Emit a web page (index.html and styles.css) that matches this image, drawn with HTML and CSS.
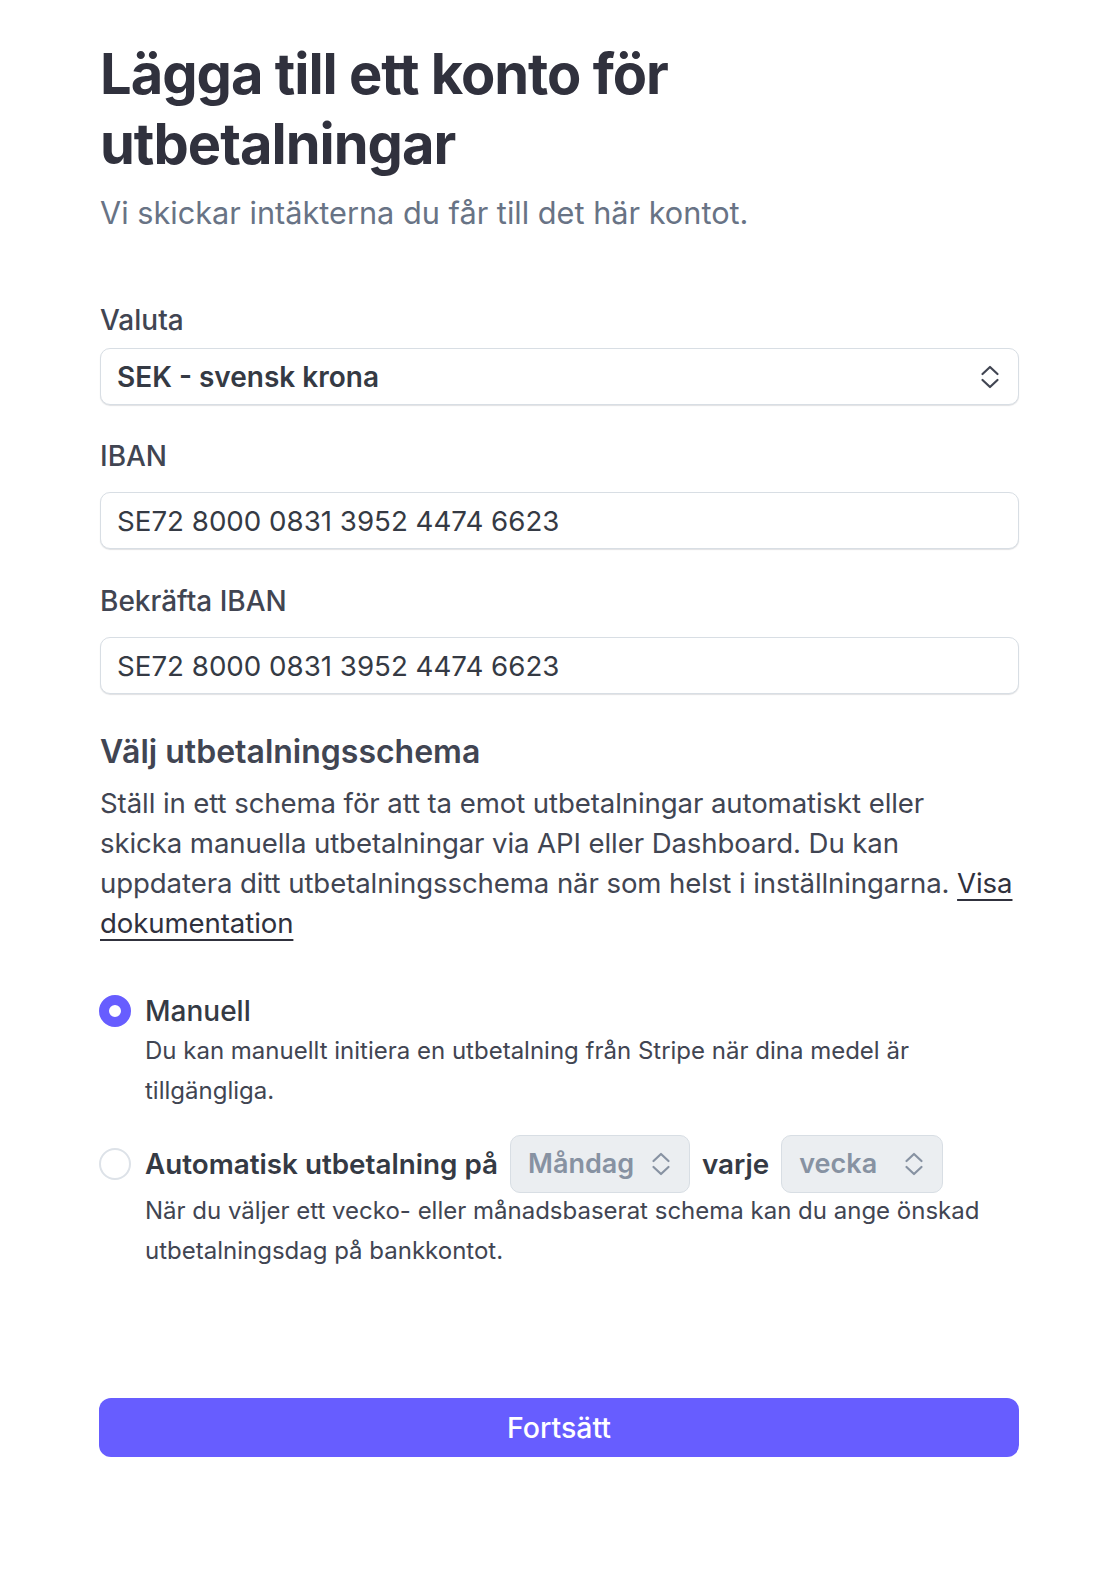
FILE: index.html
```html
<!DOCTYPE html>
<html lang="sv">
<head>
<meta charset="utf-8">
<title>Lägga till ett konto för utbetalningar</title>
<link rel="stylesheet" href="styles.css">
</head>
<body>
<main class="page">
  <h1 class="title">Lägga till ett konto för utbetalningar</h1>
  <p class="subtitle">Vi skickar intäkterna du får till det här kontot.</p>

  <form class="form">
    <div class="field field-currency">
      <label class="field-label">Valuta</label>
      <div class="select">
        <span class="select-value">SEK - svensk krona</span>
        <svg class="chevrons" width="20" height="26" viewBox="0 0 20 26"><path d="M2.5 10 L10 3 L17.5 10 M2.5 16 L10 23 L17.5 16" fill="none" stroke="currentColor" stroke-width="2.2" stroke-linecap="round" stroke-linejoin="round"/></svg>
      </div>
    </div>

    <div class="field">
      <label class="field-label">IBAN</label>
      <div class="input">SE72 8000 0831 3952 4474 6623</div>
    </div>

    <div class="field field-confirm">
      <label class="field-label">Bekräfta IBAN</label>
      <div class="input">SE72 8000 0831 3952 4474 6623</div>
    </div>

    <section class="schedule">
      <h2 class="schedule-title">Välj utbetalningsschema</h2>
      <p class="schedule-text">Ställ in ett schema för att ta emot utbetalningar automatiskt eller<br>skicka manuella utbetalningar via API eller Dashboard. Du kan<br>uppdatera ditt utbetalningsschema när som helst i inställningarna. <a class="link" href="#">Visa<br>dokumentation</a></p>

      <div class="options">
        <div class="option">
          <span class="radio radio-checked"></span>
          <div class="option-head">Manuell</div>
          <p class="option-desc">Du kan manuellt initiera en utbetalning från Stripe när dina medel är tillgängliga.</p>
        </div>

        <div class="option option-auto">
          <span class="radio"></span>
          <div class="option-head option-head-row">
            <span>Automatisk utbetalning på</span>
            <span class="mini-select mini-select-day">
              <span>Måndag</span>
              <svg class="chevrons" width="20" height="26" viewBox="0 0 20 26"><path d="M2.5 10 L10 3 L17.5 10 M2.5 16 L10 23 L17.5 16" fill="none" stroke="currentColor" stroke-width="2.2" stroke-linecap="round" stroke-linejoin="round"/></svg>
            </span>
            <span>varje</span>
            <span class="mini-select mini-select-period">
              <span>vecka</span>
              <svg class="chevrons" width="20" height="26" viewBox="0 0 20 26"><path d="M2.5 10 L10 3 L17.5 10 M2.5 16 L10 23 L17.5 16" fill="none" stroke="currentColor" stroke-width="2.2" stroke-linecap="round" stroke-linejoin="round"/></svg>
            </span>
          </div>
          <p class="option-desc option-desc-auto">När du väljer ett vecko- eller månadsbaserat schema kan du ange önskad utbetalningsdag på bankkontot.</p>
        </div>
      </div>
    </section>

    <button type="button" class="submit">Fortsätt</button>
  </form>
</main>
</body>
</html>
```

FILE: styles.css
```css
* { box-sizing: border-box; }

body {
  margin: 0;
  background: #ffffff;
  color: #30313d;
  font-family: Inter, "Noto Sans", sans-serif;
}

.page {
  width: 919px;
  margin-left: 100px;
  padding-top: 39px;
  padding-bottom: 120px;
}

.title {
  margin: 0;
  max-width: 720px;
  font-size: 56px;
  line-height: 70px;
  font-weight: 700;
  letter-spacing: -1px;
  color: #30313d;
}

.subtitle {
  margin: 14px 0 0;
  font-size: 30.7px;
  line-height: 40px;
  color: #687385;
}

.form {
  margin-top: 71px;
}

.field + .field {
  margin-top: 35px;
}

.field-confirm {
  padding-top: 1px;
}

.field-label {
  display: block;
  margin-bottom: 20px;
  font-size: 28px;
  line-height: 32px;
  font-weight: 500;
  color: #414552;
}

.field-currency .field-label {
  margin-bottom: 12px;
}

.select,
.input {
  display: flex;
  align-items: center;
  height: 57px;
  padding: 0 18px 0 16px;
  border: 1px solid #d8dee4;
  border-radius: 10px;
  box-shadow: 0 1px 1px rgba(64, 68, 82, 0.16);
  background: #ffffff;
  font-size: 28px;
  color: #353a44;
}

.input {
  font-size: 27.7px;
}

.select {
  justify-content: space-between;
}

.select-value {
  font-weight: 600;
}

.chevrons {
  display: block;
  flex: none;
  color: #414552;
}

.schedule {
  margin-top: 38px;
}

.schedule-title {
  margin: 0;
  font-size: 32px;
  line-height: 40px;
  font-weight: 600;
  color: #414552;
}

.schedule-text {
  margin: 11px -14px 0 0;
  font-size: 27.6px;
  line-height: 40px;
  letter-spacing: -0.1px;
  color: #414552;
}

.link {
  color: #30313d;
  text-decoration: underline;
  text-decoration-thickness: 2px;
  text-underline-offset: 6px;
}

.options {
  margin-top: 48px;
}

.option {
  display: grid;
  grid-template-columns: 32px 1fr;
  column-gap: 14px;
  margin-left: -1px;
}

.option + .option {
  margin-top: 24px;
}

.radio {
  grid-column: 1;
  grid-row: 1;
  align-self: center;
  width: 32px;
  height: 32px;
  border-radius: 50%;
  border: 2px solid #dde2e8;
  background: #ffffff;
}

.radio-checked {
  border: 10px solid #675dff;
}

.option-head {
  grid-column: 2;
  grid-row: 1;
  font-size: 28px;
  line-height: 40px;
  font-weight: 500;
  color: #353a44;
}

.option-head-row {
  display: flex;
  align-items: center;
  gap: 12px;
  height: 58px;
  font-size: 27.8px;
  font-weight: 600;
}

.mini-select {
  display: flex;
  align-items: center;
  justify-content: space-between;
  height: 58px;
  padding: 0 18px 0 17px;
  border: 1px solid #d8dee4;
  border-radius: 10px;
  background: #ebeef1;
  color: #8792a2;
  font-size: 27px;
}

.mini-select .chevrons {
  color: #8792a2;
}

.mini-select-day {
  width: 180px;
}

.mini-select-period {
  width: 162px;
}

.option-desc {
  grid-column: 2;
  grid-row: 2;
  margin: 0;
  font-size: 24px;
  line-height: 40px;
  color: #414552;
}

.option-desc-auto {
  margin-top: -2px;
}

.submit {
  display: block;
  width: 920px;
  height: 59px;
  margin: 127px 0 0 -1px;
  border: 0;
  border-radius: 12px;
  background: #675dff;
  color: #ffffff;
  font-family: inherit;
  font-size: 28.5px;
  font-weight: 500;
}
```
